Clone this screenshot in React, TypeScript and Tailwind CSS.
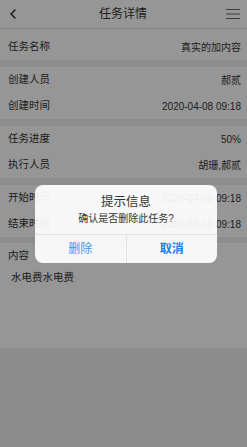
import { ChevronLeft } from "lucide-react";

const font = { fontFamily: '"Liberation Sans", "Noto Sans CJK SC", sans-serif' };

function Row({ label, value }: { label: string; value: string }) {
  return (
    <div className="flex h-[26px] items-center justify-between bg-white pl-2 pr-[6px] text-[10.5px] text-[#333]">
      <span>{label}</span>
      <span className="text-[10px]">{value}</span>
    </div>
  );
}

export default function App() {
  return (
    <div className="relative h-[447px] w-[247px] overflow-hidden bg-[#f0f0f0]" style={font}>
      {/* header */}
      <div className="flex h-[29px] items-center justify-between border-b border-[#e4e4e4] bg-white px-2">
        <ChevronLeft size={16} strokeWidth={2} className="ml-[-3px] text-[#222]" />
        <span className="text-[12px] text-[#333]">任务详情</span>
        <svg width="16" height="14" viewBox="0 0 16 14" className="mr-[-2px]">
          <path d="M1 2.5h14M1 7h14M1 11.5h14" stroke="#666" strokeWidth="1" />
        </svg>
      </div>

      <div className="bg-white pt-[5px]">
        <Row label="任务名称" value="真实的加内容" />
      </div>

      <div className="mt-[7px]">
        <Row label="创建人员" value="郝贰" />
        <Row label="创建时间" value="2020-04-08 09:18" />
      </div>

      <div className="mt-[7px]">
        <Row label="任务进度" value="50%" />
        <Row label="执行人员" value="胡珊,郝贰" />
      </div>

      <div className="mt-[7px]">
        <Row label="开始时间" value="2020-04-08 09:18" />
        <Row label="结束时间" value="2020-04-10 09:18" />
      </div>

      <div className="mt-[6px] h-[105px] bg-white">
        <div className="flex h-[26px] items-center pl-2 text-[10.5px] text-[#333]">内容</div>
        <div className="pl-[11px] pt-[1px] text-[10.5px] text-[#333]">水电费水电费</div>
      </div>

      {/* mask + dialog */}
      <div className="absolute inset-0 flex items-center justify-center bg-black/[0.41]">
        <div className="ml-[5px] w-[182px] overflow-hidden rounded-[8px] bg-white/[0.92]">
          <div className="pt-[8px] text-center text-[12.5px] leading-[18px] text-[#333]">提示信息</div>
          <div className="pb-[8px] pt-[1px] text-center text-[10px] leading-[14px] text-[#333]">确认是否删除此任务?</div>
          <div className="flex h-[29px] border-t border-[#e2e2e2] text-[12px]">
            <div className="flex flex-1 items-center justify-center text-[#3a96f5]">删除</div>
            <div className="flex flex-1 items-center justify-center border-l border-[#e2e2e2] font-bold text-[#1a7ff0]">取消</div>
          </div>
        </div>
      </div>
    </div>
  );
}
